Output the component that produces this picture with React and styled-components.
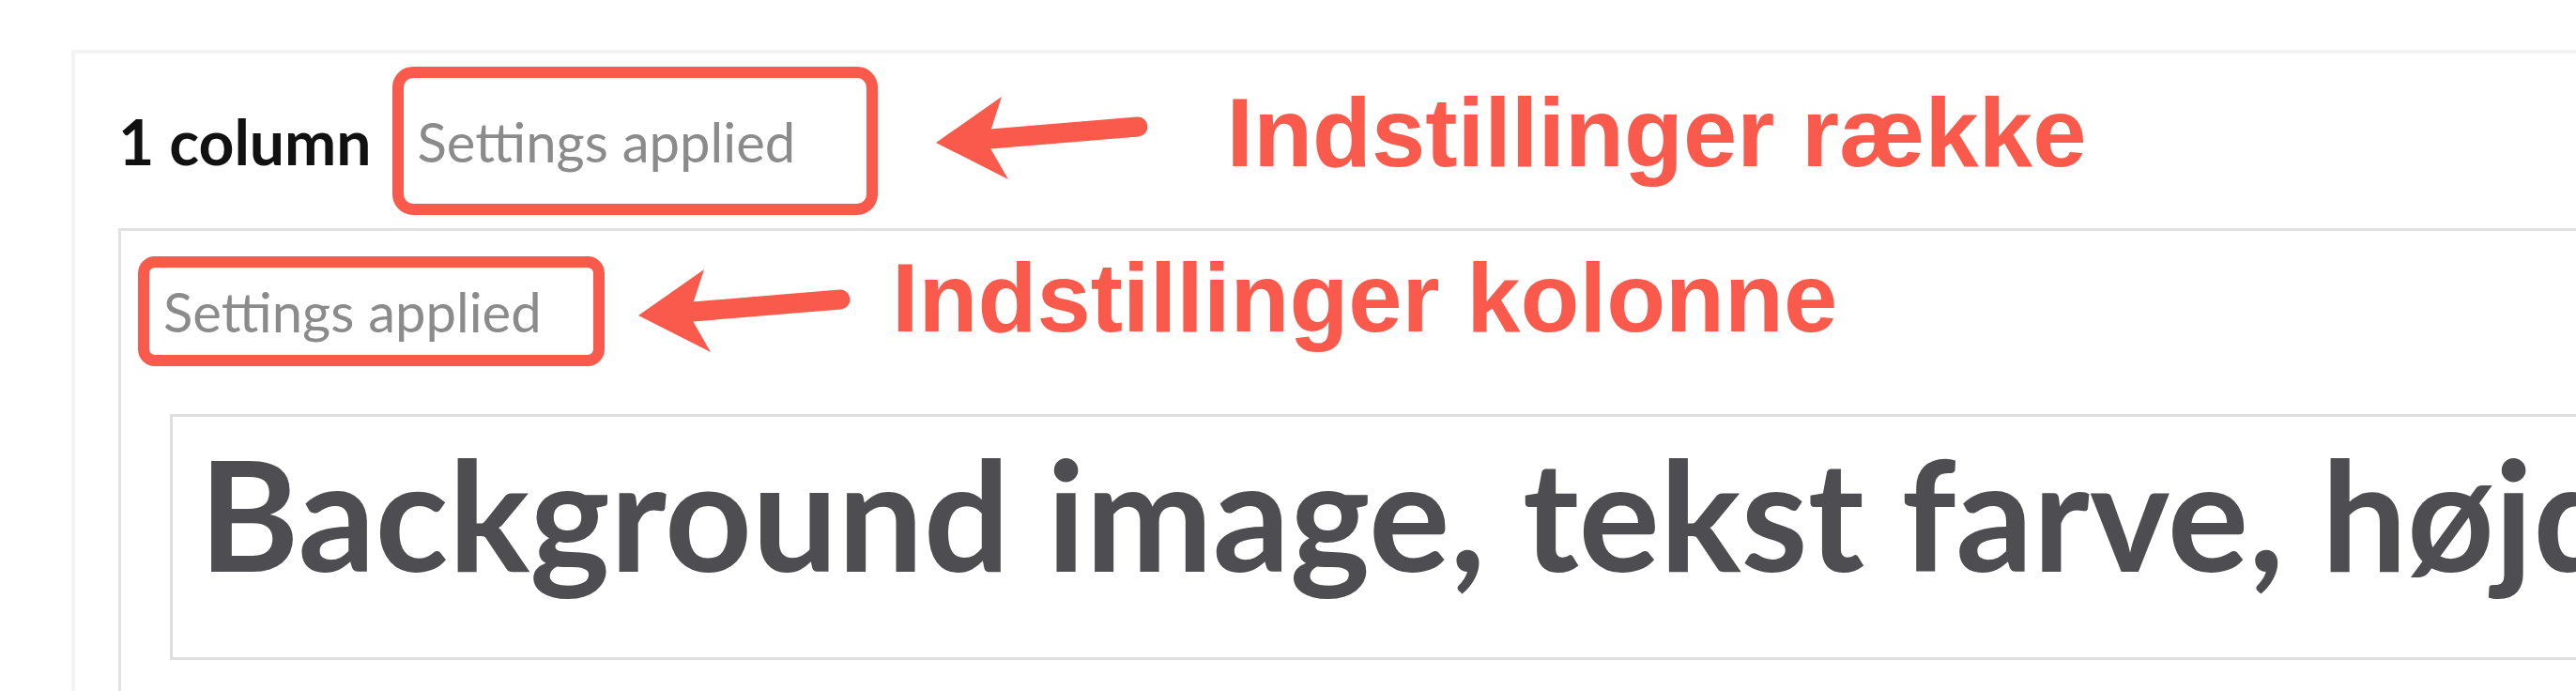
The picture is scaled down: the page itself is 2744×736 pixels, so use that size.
import React from "react";
import styled, { createGlobalStyle } from "styled-components";

const GlobalStyle = createGlobalStyle`
  html, body {
    margin: 0;
    padding: 0;
    background: #ffffff;
    overflow: hidden;
  }
`;

const Page = styled.div`
  height: 736px;
  box-sizing: border-box;
  padding: 53px 0 0 76px;
  overflow: hidden;
`;

// the outer "row" block of the page builder
const RowPanel = styled.section`
  width: 2800px;
  border: 4px solid #f3f3f3;
  border-right: none;
  border-bottom: none;
  padding: 14px 0 0 46px;
`;

const Header = styled.div`
  display: flex;
  align-items: center;
  padding-left: ${(p) => p.indent || 0}px;
`;

const RowTitle = styled.span`
  font-family: Lato, "Liberation Sans", sans-serif;
  font-weight: 700;
  font-size: 66px;
  color: #111111;
  margin-right: 22px;
  white-space: nowrap;
`;

// red hand-drawn outline round the settings tag
const Callout = styled.div`
  box-sizing: border-box;
  flex: none;
  width: ${(p) => p.w}px;
  height: ${(p) => p.h}px;
  border: 12px solid #fa5a4b;
  border-radius: ${(p) => p.r}px;
  display: flex;
  align-items: center;
  padding-left: 15px;
`;

const Applied = styled.span`
  font-family: Lato, "Liberation Sans", sans-serif;
  font-weight: 400;
  font-size: 58px;
  color: #8b8b8b;
  white-space: nowrap;
`;

const ArrowBox = styled.svg`
  flex: none;
  display: block;
  margin-left: ${(p) => p.before}px;
  margin-right: ${(p) => p.after}px;
  margin-bottom: ${(p) => p.lift || 0}px;
`;

const Note = styled.span`
  font-family: "Liberation Sans", Arial, sans-serif;
  font-weight: 700;
  font-size: 103px;
  line-height: 1;
  color: #fa5a4b;
  white-space: nowrap;
  margin: ${(p) => -p.lift}px 0 ${(p) => p.lift}px;
`;

const ColumnPanel = styled.div`
  margin-top: 14px;
  border: 3px solid #e2e2e2;
  border-right: none;
  border-bottom: none;
  padding: 27px 0 0 0;
  height: 600px;
`;

const TextBox = styled.div`
  margin: 51px 0 0 52px;
  border: 3px solid #dedede;
  border-right: none;
  height: 262px;
  box-sizing: border-box;
  padding: 6px 0 0 28px;
  overflow: hidden;
`;

const Heading = styled.h1`
  margin: 0;
  font-family: Lato, "Liberation Sans", sans-serif;
  font-weight: 700;
  font-size: 162px;
  line-height: 1.2;
  color: #4d4d52;
  white-space: nowrap;
`;

const Arrow = ({ before, after, lift }) => (
  <ArrowBox width="232" height="95" viewBox="0 0 232 95" before={before} after={after} lift={lift}>
    <line x1="60" y1="48" x2="217" y2="35" stroke="#fa5a4b" strokeWidth="21" strokeLinecap="round" />
    <polygon points="2,52 72,3 60,40 60,58 79,91" fill="#fa5a4b" />
  </ArrowBox>
);

export default function App() {
  return (
    <Page>
      <GlobalStyle />
      <RowPanel>
        <Header>
          <RowTitle>1 column</RowTitle>
          <Callout w={517} h={158} r={22}>
            <Applied>Settings applied</Applied>
          </Callout>
          <Arrow before={60} after={80} lift={6} />
          <Note lift={9}>Indstillinger række</Note>
        </Header>
        <ColumnPanel>
          <Header indent={18}>
            <Callout w={497} h={117} r={18}>
              <Applied>Settings applied</Applied>
            </Callout>
            <Arrow before={34} after={40} />
            <Note lift={14}>Indstillinger kolonne</Note>
          </Header>
          <TextBox>
            <Heading>Background image, tekst farve, højde og padding</Heading>
          </TextBox>
        </ColumnPanel>
      </RowPanel>
    </Page>
  );
}
